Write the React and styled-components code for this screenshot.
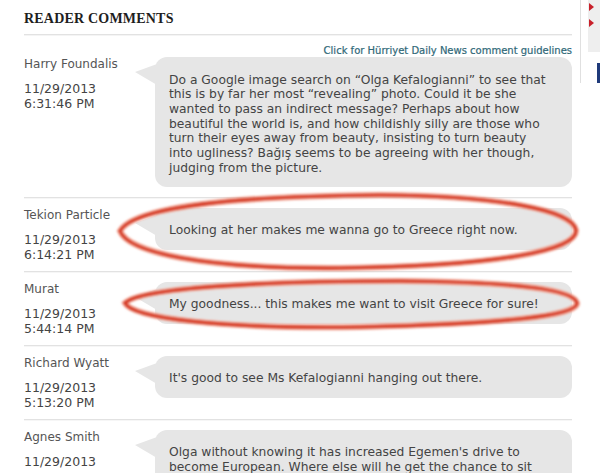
import React from "react";
import styled, { createGlobalStyle } from "styled-components";

const GlobalStyle = createGlobalStyle`
  html, body {
    margin: 0;
    padding: 0;
    background: #fff;
  }
  body {
    font-family: "DejaVu Sans", Verdana, sans-serif;
    overflow: hidden;
  }
`;

const Page = styled.div`
  position: relative;
  display: flex;
  width: 600px;
  height: 473px;
  overflow: hidden;
`;

const Main = styled.div`
  width: 548px;
  padding-left: 24px;
  flex: none;
`;

const Heading = styled.h2`
  margin: 0;
  height: 35px;
  padding-top: 11px;
  box-sizing: border-box;
  font-family: "Liberation Serif", "Times New Roman", serif;
  font-size: 14px;
  font-weight: 700;
  letter-spacing: 0.2px;
  color: #1e1e1e;
  border-bottom: 1px solid #e2e2e2;
  box-shadow: 0 1px 0 #f4f4f4;
`;

const Guidelines = styled.a`
  display: block;
  text-align: right;
  margin-top: 9px;
  height: 13px;
  line-height: 13px;
  font-size: 10px;
  font-weight: 400;
  color: #2f6878;
  text-decoration: none;
  -webkit-text-stroke: 0.2px #2f6878;
`;

const List = styled.div`
  display: flex;
  flex-direction: column;
`;

const Row = styled.div`
  display: grid;
  grid-template-columns: 131px 1fr;
  padding: ${(p) => (p.first ? "0 0 10px" : "10px 0 9px")};
  border-top: ${(p) => (p.first ? "none" : "1px solid #e2e2e2")};
  box-shadow: ${(p) => (p.first ? "none" : "inset 0 1px 0 #f6f6f6")};
`;

const Author = styled.div`
  font-size: 12px;
  line-height: 15px;
  color: #555;
`;

const Name = styled.div`
  margin-bottom: 9px;
`;

const Stamp = styled.div`
  font-size: 12.5px;
  color: #444;
`;

const Bubble = styled.div`
  position: relative;
  align-self: start;
  background: #e6e6e6;
  border-radius: 12px;
  padding: 15.5px 8px 11.5px 14px;
  font-size: 12.3px;
  line-height: 14.7px;
  color: #444;
`;

const Line = styled.span`
  display: block;
  white-space: nowrap;
`;

const Tail = styled.svg`
  position: absolute;
  left: -20px;
  top: 7px;
  width: 22px;
  height: 21px;
`;

const Sidebar = styled.div`
  margin-left: 8px;
  width: 19px;
  height: 83px;
  border-left: 1px solid #e0e0e0;
  padding-left: 7px;
  display: flex;
  flex-direction: column;
  gap: 11px;
`;

const GreyBox = styled.div`
  height: 52px;
  background: #eeeeee;
  display: flex;
  flex-direction: column;
  gap: 8px;
  padding-top: 3px;
  box-sizing: border-box;
`;

const Arrow = styled.span`
  width: 0;
  height: 0;
  border-top: 4px solid transparent;
  border-bottom: 4px solid transparent;
  border-left: 5px solid #c8202a;
  margin-left: 1px;
`;

const NavyBox = styled.div`
  margin-left: 9px;
  height: 20px;
  background: #1f3a7a;
`;

const Marks = styled.svg`
  position: absolute;
  left: 0;
  top: 0;
  width: 600px;
  height: 473px;
  pointer-events: none;
`;

const comments = [
  {
    name: "Harry Foundalis",
    date: "11/29/2013",
    time: "6:31:46 PM",
    lines: [
      "Do a Google image search on \u201cOlga Kefalogianni\u201d to see that",
      "this is by far her most \u201crevealing\u201d photo. Could it be she",
      "wanted to pass an indirect message? Perhaps about how",
      "beautiful the world is, and how childishly silly are those who",
      "turn their eyes away from beauty, insisting to turn beauty",
      "into ugliness? Ba\u011f\u0131\u015f seems to be agreeing with her though,",
      "judging from the picture.",
    ],
  },
  {
    name: "Tekion Particle",
    date: "11/29/2013",
    time: "6:14:21 PM",
    lines: ["Looking at her makes me wanna go to Greece right now."],
  },
  {
    name: "Murat",
    date: "11/29/2013",
    time: "5:44:14 PM",
    lines: ["My goodness... this makes me want to visit Greece for sure!"],
  },
  {
    name: "Richard Wyatt",
    date: "11/29/2013",
    time: "5:13:20 PM",
    lines: ["It's good to see Ms Kefalogianni hanging out there."],
  },
  {
    name: "Agnes Smith",
    date: "11/29/2013",
    time: "",
    lines: [
      "Olga without knowing it has increased Egemen's drive to",
      "become European. Where else will he get the chance to sit",
      "next to her?",
    ],
  },
];

const ellipses = [
  "M120 231 C 135 205, 250 196, 380 195 C 500 196, 572 210, 576 230 C 578 250, 500 266, 340 268 C 200 269, 128 252, 120 231 Z",
  "M125 303 C 140 288, 260 281, 400 281 C 520 282, 574 290, 577 303 C 578 316, 500 324, 360 327 C 220 329, 132 318, 125 303 Z",
];

function Comment({ c, first }) {
  return (
    <Row first={first}>
      <Author>
        <Name>{c.name}</Name>
        <Stamp>{c.date}</Stamp>
        <Stamp>{c.time}</Stamp>
      </Author>
      <Bubble>
        <Tail viewBox="0 0 22 21">
          <polygon points="0,8 22,0 22,21" fill="#e6e6e6" />
        </Tail>
        {c.lines.map((l) => (
          <Line key={l}>{l}</Line>
        ))}
      </Bubble>
    </Row>
  );
}

export default function App() {
  return (
    <>
      <GlobalStyle />
      <Page>
        <Main>
          <Heading>READER COMMENTS</Heading>
          <Guidelines href="#">Click for Hürriyet Daily News comment guidelines</Guidelines>
          <List>
            {comments.map((c, i) => (
              <Comment key={c.name} c={c} first={i === 0} />
            ))}
          </List>
        </Main>
        <Sidebar>
          <GreyBox>
            <Arrow />
            <Arrow />
          </GreyBox>
          <NavyBox />
        </Sidebar>
        <Marks viewBox="0 0 600 473">
          <defs>
            <filter id="soft" x="-5%" y="-20%" width="110%" height="140%">
              <feGaussianBlur stdDeviation="0.9" />
            </filter>
          </defs>
          <g fill="none" strokeLinecap="round" filter="url(#soft)">
            {ellipses.map((d) => (
              <g key={d}>
                <path d={d} stroke="#f2a08e" strokeWidth="6" />
                <path d={d} stroke="#d63a22" strokeWidth="3.2" />
              </g>
            ))}
          </g>
        </Marks>
      </Page>
    </>
  );
}
